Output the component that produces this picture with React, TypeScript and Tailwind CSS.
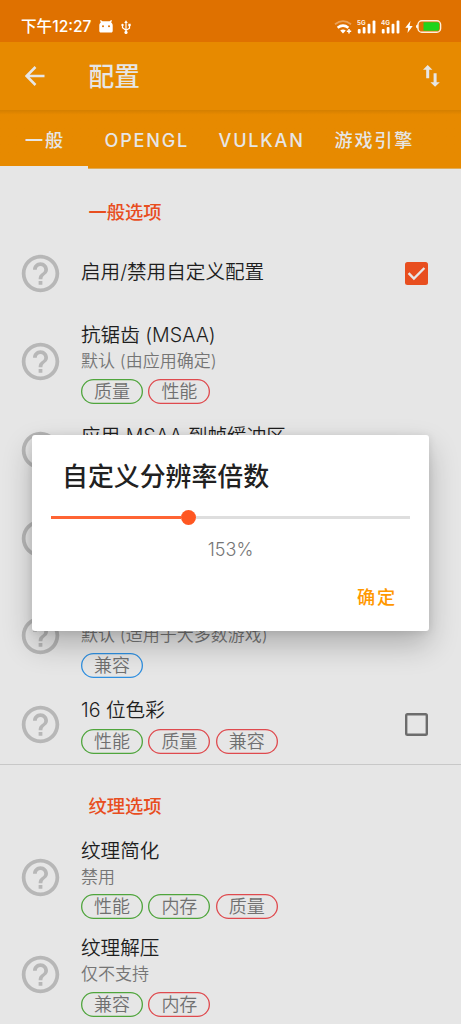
import React from "react";

type Tone = "green" | "red" | "blue";
type Tag = { label: string; tone: Tone };
type Option = {
  title: string;
  summary?: string;
  tags?: Tag[];
  checked?: boolean;
};

const toneClass: Record<Tone, string> = {
  green: "shadow-[inset_0_0_0_1.3px_#4fa53c]",
  red: "shadow-[inset_0_0_0_1.3px_#df4a4e]",
  blue: "shadow-[inset_0_0_0_1.3px_#2f8fe0]",
};

const general: Option[] = [
  { title: "启用/禁用自定义配置", checked: true },
  {
    title: "抗锯齿 (MSAA)",
    summary: "默认 (由应用确定)",
    tags: [{ label: "质量", tone: "green" }, { label: "性能", tone: "red" }],
  },
  { title: "应用 MSAA 到帧缓冲区" },
  { title: "", summary: " " },
  {
    title: "",
    summary: "默认 (适用于大多数游戏)",
    tags: [{ label: "兼容", tone: "blue" }],
  },
  {
    title: "16 位色彩",
    checked: false,
    tags: [
      { label: "性能", tone: "green" },
      { label: "质量", tone: "red" },
      { label: "兼容", tone: "red" },
    ],
  },
];

const textures: Option[] = [
  {
    title: "纹理简化",
    summary: "禁用",
    tags: [
      { label: "性能", tone: "green" },
      { label: "内存", tone: "green" },
      { label: "质量", tone: "red" },
    ],
  },
  {
    title: "纹理解压",
    summary: "仅不支持",
    tags: [{ label: "兼容", tone: "green" }, { label: "内存", tone: "red" }],
  },
];

function HelpIcon() {
  return (
    <svg viewBox="0 0 24 24" className="size-[45px] shrink-0 fill-[#b7b7b7]">
      <path d="M11 18h2v-2h-2v2zm1-16C6.48 2 2 6.48 2 12s4.48 10 10 10 10-4.48 10-10S17.52 2 12 2zm0 18c-4.41 0-8-3.59-8-8s3.59-8 8-8 8 3.59 8 8-3.59 8-8 8zm0-14c-2.21 0-4 1.79-4 4h2c0-1.1.9-2 2-2s2 .9 2 2c0 2-3 1.75-3 5h2c0-2.25 3-2.5 3-5 0-2.21-1.79-4-4-4z" />
    </svg>
  );
}

function Checkbox({ checked }: { checked: boolean }) {
  if (!checked) {
    return <span className="size-[23px] shrink-0 rounded-[2.5px] shadow-[inset_0_0_0_2.4px_#6c6c6c]" />;
  }
  return (
    <span className="flex size-[23px] shrink-0 items-center justify-center rounded-[2.5px] bg-[#e84e1f]">
      <svg viewBox="0 0 23 23" className="size-full fill-none stroke-[#e6e6e6] stroke-[2.4]">
        <path d="M3.6 11.2 8.9 16.5 19.4 6" />
      </svg>
    </span>
  );
}

function OptionRow({ title, summary, tags, checked }: Option) {
  const pad = summary
    ? "h-[97.5px] pt-[9.2px]"
    : tags
      ? "h-[79px] pt-[12px]"
      : checked === undefined
        ? "h-[79px] pt-[12px]"
        : "h-[79px] pt-[25px]";
  return (
    <div className="flex items-center pr-[33px] pl-[18px]">
      <HelpIcon />
      <div className={`ml-[18px] min-w-0 flex-1 ${pad}`}>
        <div className="h-[26px] text-[19.6px] leading-[26px] font-[350] whitespace-nowrap text-[#1e1e1e]">{title}</div>
        {summary && (
          <div className="h-[27px] text-[17px] leading-[27px] font-[350] whitespace-nowrap text-[#757575]">{summary}</div>
        )}
        {tags && (
          <div className={summary ? "mt-[3.8px] flex gap-[5.7px]" : "mt-[6px] flex gap-[5.7px]"}>
            {tags.map((t) => (
              <span
                key={t.label}
                className={`flex h-[25px] w-[61.8px] items-center justify-center rounded-full pt-px text-[18px] leading-[24px] font-[350] text-[#707070] ${toneClass[t.tone]}`}
              >
                {t.label}
              </span>
            ))}
          </div>
        )}
      </div>
      {checked !== undefined && <Checkbox checked={checked} />}
    </div>
  );
}

function Signal({ label }: { label: string }) {
  return (
    <svg viewBox="0 0 20 16" className="h-4 w-5 fill-white">
      <text x="0" y="5.6" fontSize="6.2" fontWeight="700" opacity="0.9">{label}</text>
      <rect x="0.8" y="10" width="2.8" height="4.6" rx="1" />
      <rect x="5.7" y="8" width="2.8" height="6.6" rx="1" />
      <rect x="10.6" y="4.8" width="2.8" height="9.8" rx="1" />
      <rect x="15.6" y="1.4" width="2.8" height="13.2" rx="1" />
    </svg>
  );
}

function StatusBar() {
  return (
    <div className="flex h-[42px] items-end bg-[#df7100] pb-[7px] pl-[21px] text-white">
      <span className="h-[18px] w-[71px] text-[15.6px] leading-[20px] font-medium whitespace-nowrap">下午12:27</span>
      <svg viewBox="0 0 14 13" className="mb-[2px] ml-[7px] h-[13px] w-[14px]">
        <path d="M1.8 0 3.4 1.3h7.2L12.2 0l.8.7-.9 1.5c1 .8 1.6 2 1.6 3.3v5.6c0 .9-.6 1.5-1.5 1.5H1.8c-.9 0-1.5-.6-1.5-1.5V5.5c0-1.3.6-2.5 1.6-3.3L1 .7z" fill="#fff" />
        <circle cx="4" cy="6.2" r="1" fill="#df7100" />
        <circle cx="10" cy="6.2" r="1" fill="#df7100" />
      </svg>
      <svg viewBox="0 0 10 14" className="mb-[1px] ml-[8px] h-[14.5px] w-[10px] fill-none stroke-white stroke-[1.2]">
        <path d="M5 2v10M1.5 5v2.5L5 10l3.5-2V5" />
        <path d="M5 0 3.2 2.7h3.6z" fill="#fff" stroke="none" />
        <circle cx="5" cy="12.2" r="1.6" fill="#fff" stroke="none" />
        <circle cx="1.5" cy="4.7" r="1.2" fill="#fff" stroke="none" />
        <path d="M7.3 3.5h2.4v2.4H7.3z" fill="#fff" stroke="none" />
      </svg>
      <svg viewBox="0 0 18 14" className="mr-[5px] mb-[1px] ml-auto h-[14px] w-[18px] fill-none stroke-white">
        <path d="M1 4.2Q9-2 17 4.2" strokeWidth="1.8" opacity="0.35" />
        <path d="M3.6 7.7Q9 3.6 14.4 7.7" strokeWidth="2.5" />
        <path d="M6.2 10.4q2.8-2 5.6 0L9 13.6z" fill="#fff" stroke="none" />
        <path d="M15 9v4.4M12.8 11.2h4.4" strokeWidth="1.5" />
      </svg>
      <Signal label="5G" />
      <span className="w-1" />
      <Signal label="4G" />
      <svg viewBox="0 0 8 12" className="mb-[2px] ml-[4px] h-[12px] w-[8px] fill-white">
        <path d="M5.5 0 .3 6.7h2.9L2.5 12l5.2-7H4.6z" />
      </svg>
      <svg viewBox="0 0 26 13" className="mr-[19.5px] mb-[2px] ml-[3px] h-[13px] w-[26px]">
        <rect x="2" y=".8" width="22.6" height="11.4" rx="3.8" fill="none" stroke="#fff0dc" strokeWidth="1.4" />
        <path d="M1.8 4.5v4Q0 8.300 0 6.500t1.800-2z" fill="#fff" />
        <path d="M7.5 2.2h13.8q2 0 2 2v4.6q0 2-2 2H7.5z" fill="#20d41b" />
      </svg>
    </div>
  );
}

function SectionTitle({ children, className }: { children: string; className: string }) {
  return (
    <h2 className={`pl-[88.5px] text-[18.3px] leading-[26px] font-medium text-[#e84e1f] ${className}`}>{children}</h2>
  );
}

export default function App() {
  return (
    <div className="relative h-[1024px] w-[461px] overflow-hidden bg-[#e6e6e6] font-['Inter','Noto_Sans_CJK_SC',sans-serif]">
      <StatusBar />
      <header className="flex h-[68px] items-center bg-[#e78a00] pl-[25px] text-[#e6e6e6]">
        <svg viewBox="0 0 20 20" className="size-[20px] fill-none stroke-current stroke-[2.5]">
          <path d="M19.5 10H2M10.5 1 1.6 10l8.9 9" />
        </svg>
        <h1 className="mt-[2px] ml-[43.5px] text-[25.7px] leading-[36px] font-medium">配置</h1>
        <svg viewBox="0 0 17 22" className="mr-[21px] ml-auto h-[22px] w-[17px] fill-current">
          <path d="M4.7 0 0 4.7h3.2v8.6h3V4.7h3.2zM13.6 8.300h-3v8.900H7.400l4.700 4.600 4.700-4.600h-3.200z" />
        </svg>
      </header>
      <nav className="flex h-[59px] border-b border-[#dfac59] bg-linear-to-b from-[#d47f00] via-[#e78a00] via-8% to-[#e78a00] text-[18.1px] leading-[61px] font-medium tracking-[1.8px] whitespace-nowrap text-[#e6e6e6]">
        <div className="h-[59px] w-[88px] border-b-[3px] border-[#e6e6e6] pl-[25px]">一般</div>
        <div className="w-[114px] pl-[16.5px]">OPENGL</div>
        <div className="w-[116px] pl-[16.5px]">VULKAN</div>
        <div className="pl-[16.5px]">游戏引擎</div>
      </nav>
      <main>
        <SectionTitle className="h-[65px] pt-[30px]">一般选项</SectionTitle>
        {general.map((o, i) => (
          <OptionRow key={i} {...o} />
        ))}
        <div className="h-px bg-[#c8c8c8]" />
        <SectionTitle className="h-[64px] pt-[28px]">纹理选项</SectionTitle>
        {textures.map((o, i) => (
          <OptionRow key={i} {...o} />
        ))}
      </main>

      <div
        role="dialog"
        className="absolute top-[435px] left-[32px] flex h-[196px] w-[397px] flex-col rounded-[3px] bg-white shadow-[0_14px_30px_rgba(0,0,0,0.24),0_1px_8px_rgba(0,0,0,0.10)]"
      >
        <h2 className="mt-[23px] h-[37px] pl-[30px] text-[25.9px] leading-[37px] font-medium text-[#212121]">自定义分辨率倍数</h2>
        <div className="mx-[19px] mt-[15px] flex h-[15px] items-center">
          <div className="h-[3px] w-[129.5px] bg-[#ff6434]" />
          <div className="size-[15px] rounded-full bg-[#ff5722]" />
          <div className="h-[2.5px] flex-1 bg-[#dedede]" />
        </div>
        <div className="mt-[13px] text-center text-[18px] leading-[24px] font-[350] text-[#757575]">153%</div>
        <button className="mt-[21px] mr-[32px] self-end text-[18.2px] leading-[28px] font-medium tracking-[1.8px] text-[#ff9800]">确定</button>
      </div>
    </div>
  );
}
